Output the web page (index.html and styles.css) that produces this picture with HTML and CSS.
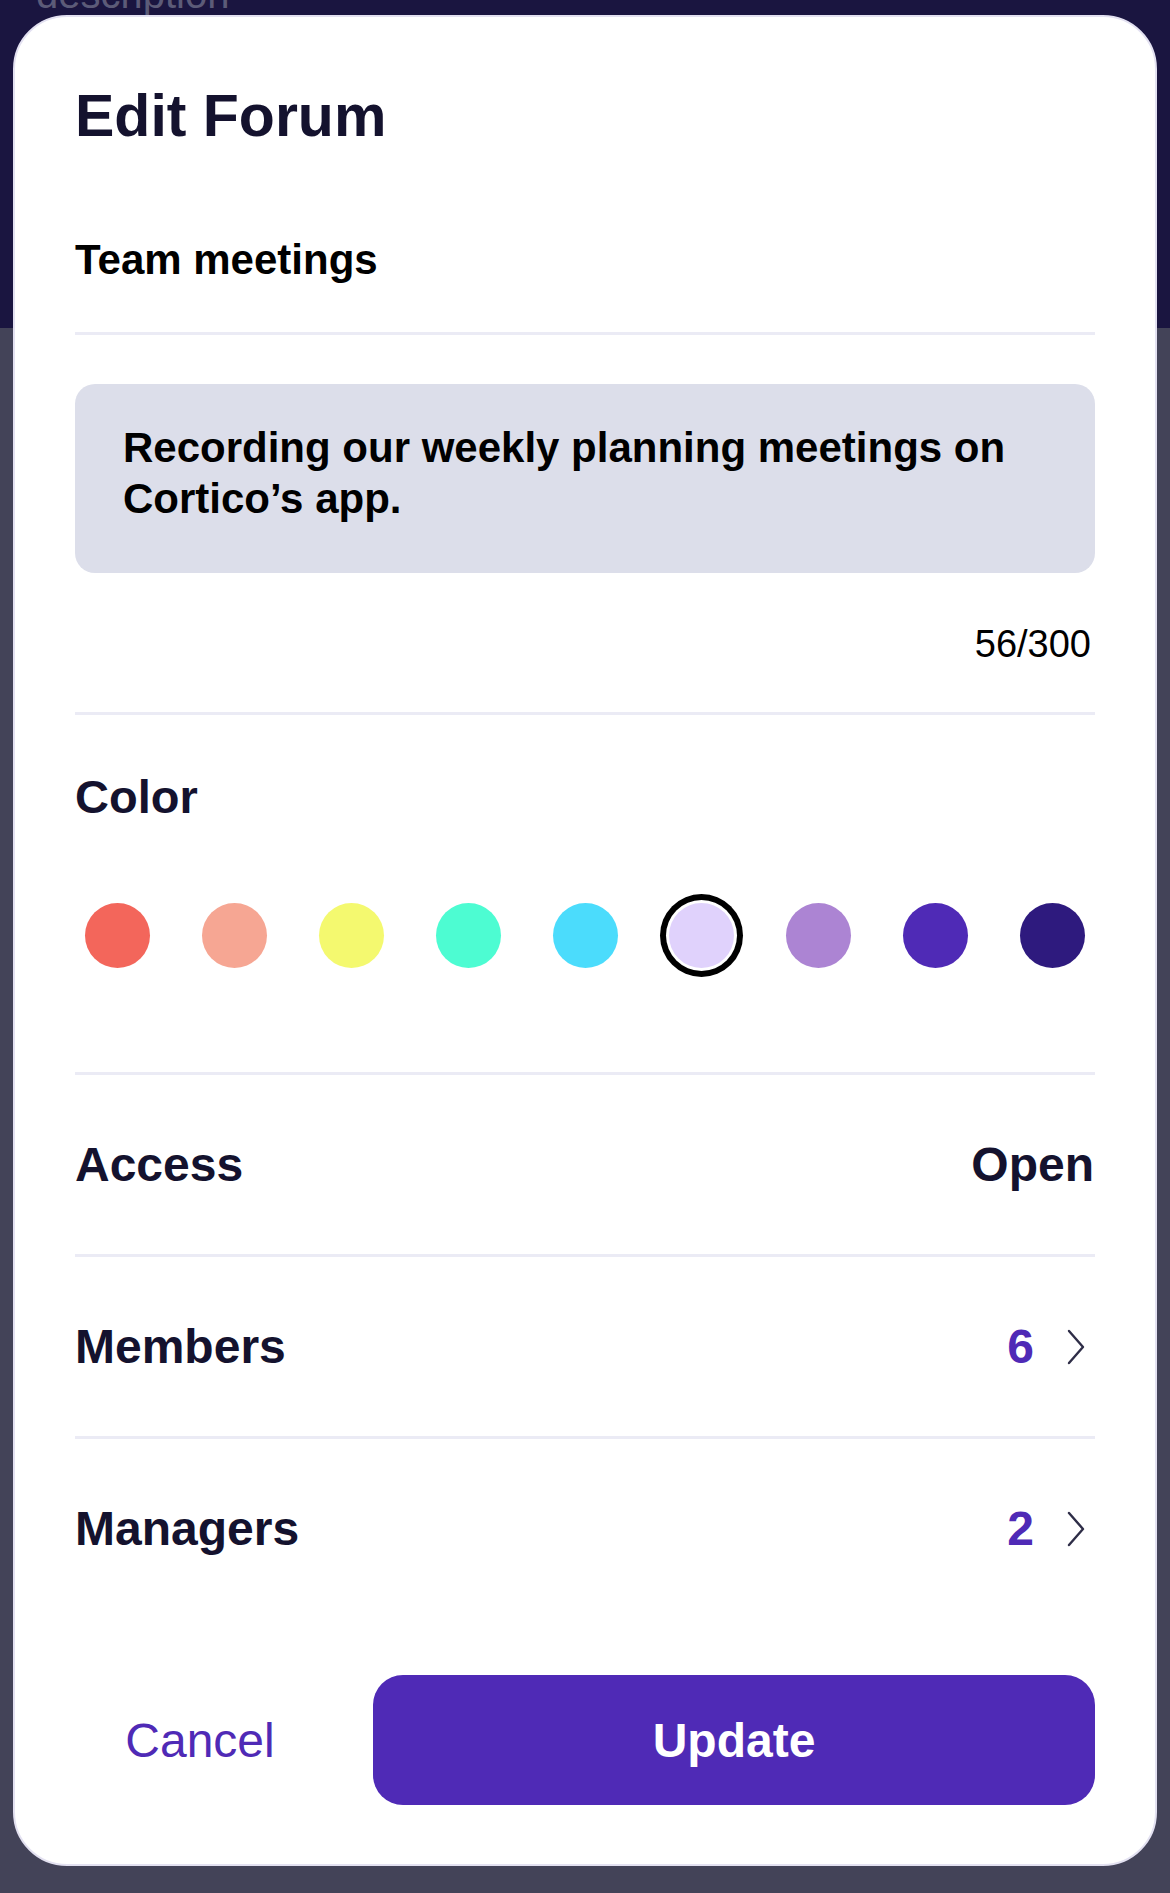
FILE: index.html
```html
<!DOCTYPE html>
<html lang="en">
<head>
<meta charset="utf-8">
<title>Edit Forum</title>
<link rel="stylesheet" href="styles.css">
</head>
<body>
<div class="page">
  <div class="page-header">
    <p class="page-desc">description</p>
  </div>
</div>
<div class="modal">
  <h1 class="title">Edit Forum</h1>
  <div class="name-field">Team meetings</div>
  <div class="desc">Recording our weekly planning meetings on Cortico’s app.</div>
  <div class="counter">56/300</div>
  <div class="color-section">
    <h2 class="section-label">Color</h2>
    <div class="swatches">
      <span class="swatch" style="background:#f3665b"></span>
      <span class="swatch" style="background:#f6a693"></span>
      <span class="swatch" style="background:#f4f96f"></span>
      <span class="swatch" style="background:#4dfcd2"></span>
      <span class="swatch" style="background:#4bdcfc"></span>
      <span class="swatch selected" style="background:#e0d2fc"></span>
      <span class="swatch" style="background:#ac84d3"></span>
      <span class="swatch" style="background:#4f2ab6"></span>
      <span class="swatch" style="background:#2e1a7e"></span>
    </div>
  </div>
  <div class="row">
    <span class="row-label">Access</span>
    <span class="row-value">Open</span>
  </div>
  <div class="row">
    <span class="row-label">Members</span>
    <span class="row-link"><span class="count">6</span>
      <svg class="chev" width="20" height="36" viewBox="0 0 20 36"><path d="M3 2 L17 18 L3 34" fill="none" stroke="#2e2d47" stroke-width="2.4" stroke-linecap="round" stroke-linejoin="round"/></svg>
    </span>
  </div>
  <div class="row last">
    <span class="row-label">Managers</span>
    <span class="row-link"><span class="count">2</span>
      <svg class="chev" width="20" height="36" viewBox="0 0 20 36"><path d="M3 2 L17 18 L3 34" fill="none" stroke="#2e2d47" stroke-width="2.4" stroke-linecap="round" stroke-linejoin="round"/></svg>
    </span>
  </div>
  <div class="footer">
    <button class="btn-cancel">Cancel</button>
    <button class="btn-update">Update</button>
  </div>
</div>
</body>
</html>
```

FILE: styles.css
```css
html, body {
  margin: 0;
  padding: 0;
}
body {
  width: 1170px;
  height: 1893px;
  background: #434358;
  font-family: "Liberation Sans", Arial, sans-serif;
  position: relative;
  overflow: hidden;
}
.page-header {
  height: 328px;
  background: #1a1540;
  overflow: hidden;
}
.page-desc {
  margin: 0;
  margin-top: -31px;
  padding-left: 36px;
  font-size: 40px;
  line-height: 50px;
  color: #5c5b78;
}
.modal {
  position: absolute;
  left: 13px;
  top: 15px;
  width: 1144px;
  box-sizing: border-box;
  background: #ffffff;
  border: 2px solid #e3e1f1;
  border-radius: 54px;
  padding: 64px 60px 59px 60px;
}
.title {
  margin: 0;
  font-size: 59px;
  line-height: 70px;
  font-weight: 700;
  color: #14122e;
}
.name-field {
  margin-top: 84px;
  font-size: 42px;
  line-height: 50px;
  font-weight: 700;
  color: #000000;
  padding-bottom: 47px;
  border-bottom: 3px solid #ebebf5;
}
.desc {
  margin-top: 49px;
  background: #dcdeea;
  border-radius: 20px;
  padding: 38px 48px 49px 48px;
  font-size: 42px;
  line-height: 51px;
  font-weight: 700;
  color: #000000;
}
.counter {
  margin-top: 51px;
  text-align: right;
  padding-right: 4px;
  font-size: 38px;
  line-height: 40px;
  color: #000000;
  padding-bottom: 48px;
  border-bottom: 3px solid #ebebf5;
}
.color-section {
  padding-top: 54px;
  padding-bottom: 104px;
  border-bottom: 3px solid #ebebf5;
}
.section-label {
  margin: 0;
  font-size: 47px;
  line-height: 56px;
  font-weight: 700;
  color: #14122e;
}
.swatches {
  margin-top: 78px;
  display: flex;
  justify-content: space-between;
  padding: 0 10px;
}
.swatch {
  width: 65px;
  height: 65px;
  border-radius: 50%;
  display: block;
}
.swatch.selected {
  box-shadow: 0 0 0 3px #ffffff, 0 0 0 9px #000000;
}
.row {
  height: 179px;
  display: flex;
  align-items: center;
  justify-content: space-between;
  border-bottom: 3px solid #ebebf5;
  font-size: 48px;
  line-height: 56px;
  font-weight: 700;
  color: #14122e;
}
.row.last {
  border-bottom: none;
}
.row-value {
  padding-right: 1px;
}
.row-link {
  display: flex;
  align-items: center;
  gap: 32px;
  padding-right: 9px;
}
.count {
  color: #4f2ab6;
}
.chev {
  display: block;
}
.footer {
  margin-top: 57px;
  display: flex;
  gap: 48px;
  height: 130px;
}
.btn-cancel {
  width: 250px;
  border: none;
  background: transparent;
  font-family: "Liberation Sans", Arial, sans-serif;
  font-size: 48px;
  font-weight: 400;
  color: #4f2ab6;
  padding: 0;
  cursor: pointer;
}
.btn-update {
  flex: 1;
  border: none;
  border-radius: 30px;
  background: #4f2ab6;
  color: #ffffff;
  font-family: "Liberation Sans", Arial, sans-serif;
  font-size: 48px;
  font-weight: 700;
  cursor: pointer;
}
```
